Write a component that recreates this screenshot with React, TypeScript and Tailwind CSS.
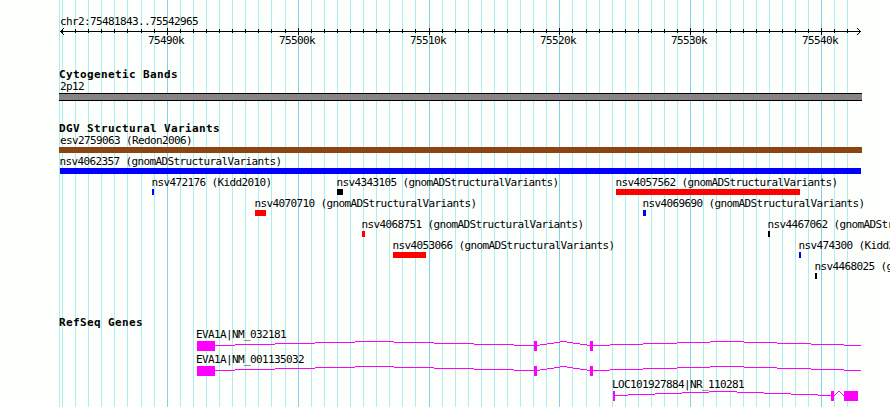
interface Feature {
  name: string;
  start: number;
  end: number;
  color: string;
}

interface Gene {
  name: string;
  labelX: number;
  exons: [number, number][];
  // last pixel of the transcript when it runs out of the view
  tail?: number;
}

const VIEW_START = 81.844;
const PX_PER_KB = 13.0884;
const LEFT = 60;

const toX = (kb: number) => Math.round(LEFT + (kb - VIEW_START) * PX_PER_KB);

const ticks = Array.from({ length: 61 }, (_, i) => {
  const kb = 82 + i;
  return { kb, x: toX(kb), major: kb % 10 === 0 };
});

const variantRows: Feature[][] = [
  [{ name: 'esv2759063 (Redon2006)', start: 59, end: 862, color: 'bg-[#8b4513]' }],
  [{ name: 'nsv4062357 (gnomADStructuralVariants)', start: 60, end: 861, color: 'bg-[#0000ff]' }],
  [
    { name: 'nsv472176 (Kidd2010)', start: 152, end: 154, color: 'bg-[#0000ff]' },
    { name: 'nsv4343105 (gnomADStructuralVariants)', start: 337, end: 343, color: 'bg-black' },
    { name: 'nsv4057562 (gnomADStructuralVariants)', start: 616, end: 800, color: 'bg-[#ff0000]' },
  ],
  [
    { name: 'nsv4070710 (gnomADStructuralVariants)', start: 255, end: 266, color: 'bg-[#ff0000]' },
    { name: 'nsv4069690 (gnomADStructuralVariants)', start: 643, end: 646, color: 'bg-[#0000ff]' },
  ],
  [
    { name: 'nsv4068751 (gnomADStructuralVariants)', start: 362, end: 365, color: 'bg-[#ff0000]' },
    { name: 'nsv4467062 (gnomADStructuralVariants)', start: 768, end: 770, color: 'bg-black' },
  ],
  [
    { name: 'nsv4053066 (gnomADStructuralVariants)', start: 393, end: 426, color: 'bg-[#ff0000]' },
    { name: 'nsv474300 (Kidd2010)', start: 799, end: 801, color: 'bg-[#0000ff]' },
  ],
  [{ name: 'nsv4468025 (gnomADStructuralVariants)', start: 815, end: 817, color: 'bg-black' }],
];

const genes: Gene[] = [
  { name: 'EVA1A|NM_032181', labelX: 196, exons: [[197, 215], [534, 537], [590, 593]], tail: 861 },
  { name: 'EVA1A|NM_001135032', labelX: 196, exons: [[197, 215], [534, 537], [590, 593]], tail: 861 },
  { name: 'LOC101927884|NR_110281', labelX: 612, exons: [[613, 615], [831, 834], [844, 858]] },
];

// horizontal one pixel runs that climb 4px to the middle of the intron and back
function intronRuns(start: number, end: number) {
  const runs: { x: number; y: number; width: number }[] = [];
  for (let x = start; x < end; x++) {
    const rise = 4 * (1 - Math.abs((2 * (x + 0.5 - start)) / (end - start) - 1));
    const y = 4 - Math.round(rise);
    const last = runs[runs.length - 1];
    if (last && last.y === y) last.width++;
    else runs.push({ x, y, width: 1 });
  }
  return runs;
}

function GridLines() {
  return (
    <svg className="absolute inset-0" width="890" height="407" shapeRendering="crispEdges">
      <rect x="59" y="0" width="1" height="407" fill="#afeeee" />
      {ticks.map(t => (
        <rect key={t.kb} x={t.x} y="0" width="1" height="407" fill={t.major ? '#87ceeb' : '#afeeee'} />
      ))}
    </svg>
  );
}

function Ruler() {
  return (
    <div>
      <svg className="block" width="890" height="7" shapeRendering="crispEdges">
        <rect x="60" y="3" width="801" height="1" />
        {ticks.map(t => (
          <rect key={t.kb} x={t.x} y={t.major ? 0 : 1} width="1" height={t.major ? 7 : 4} />
        ))}
        {[1, 2, 3].map(d => (
          <g key={d}>
            <rect x={60 + d} y={3 - d} width="1" height="1" />
            <rect x={60 + d} y={3 + d} width="1" height="1" />
            <rect x={860 - d} y={3 - d} width="1" height="1" />
            <rect x={860 - d} y={3 + d} width="1" height="1" />
          </g>
        ))}
      </svg>
      <div className="relative h-3">
        {ticks.filter(t => t.major).map(t => (
          <span key={t.kb} className="absolute top-0" style={{ left: t.x - 19 }}>
            {75400 + t.kb}k
          </span>
        ))}
      </div>
    </div>
  );
}

function TrackTitle({ children }: { children: string }) {
  return <h2 className="h-3 pl-[59px] font-bold tracking-[0.378px]">{children}</h2>;
}

function VariantRow({ features }: { features: Feature[] }) {
  return (
    <div className="relative h-[21px]">
      {features.map(f => (
        <div key={f.name} className="absolute top-0" style={{ left: f.start }}>
          <div className="h-3" style={{ marginLeft: f.start < LEFT ? 1 : -0.5 }}>{f.name}</div>
          <div className={`h-1.5 ${f.color}`} style={{ width: f.end - f.start }} />
        </div>
      ))}
    </div>
  );
}

function GeneRow({ gene }: { gene: Gene }) {
  const introns = gene.exons
    .map((exon, i) => [exon[1], gene.exons[i + 1]?.[0] ?? gene.tail ?? exon[1]])
    .filter(([a, b]) => b > a);

  return (
    <div className="h-[25px]">
      <div className="h-3" style={{ paddingLeft: gene.labelX }}>{gene.name}</div>
      <svg className="block" width="890" height="10" fill="#ff00ff" shapeRendering="crispEdges">
        {introns.flatMap(([a, b]) => intronRuns(a, b)).map(run => (
          <rect key={run.x} x={run.x} y={run.y} width={run.width} height="1" />
        ))}
        {gene.exons.map(([a, b]) => (
          <rect key={a} x={a} y="0" width={b - a} height="10" />
        ))}
      </svg>
    </div>
  );
}

export default function App() {
  return (
    <div className="relative h-[407px] w-[890px] overflow-hidden bg-[#fdfffc] font-['DejaVu_Sans_Mono',monospace] text-[11px] leading-3 tracking-[-0.622px] whitespace-nowrap text-black">
      <GridLines />
      <main className="relative flex flex-col pt-4">
        <div className="h-3 pl-[60px]">chr2:75481843..75542965</div>
        <Ruler />

        <section className="mt-[22px]">
          <TrackTitle>Cytogenetic Bands</TrackTitle>
          <div className="h-3 pl-[60px]">2p12</div>
          <div className="ml-[59px] h-2 w-[803px] border-y border-black bg-[#888385]" />
        </section>

        <section className="mt-[22px]">
          <TrackTitle>DGV Structural Variants</TrackTitle>
          {variantRows.map(row => (
            <VariantRow key={row[0].name} features={row} />
          ))}
        </section>

        <section className="mt-[35px]">
          <TrackTitle>RefSeq Genes</TrackTitle>
          {genes.map(gene => (
            <GeneRow key={gene.name} gene={gene} />
          ))}
        </section>
      </main>
    </div>
  );
}
